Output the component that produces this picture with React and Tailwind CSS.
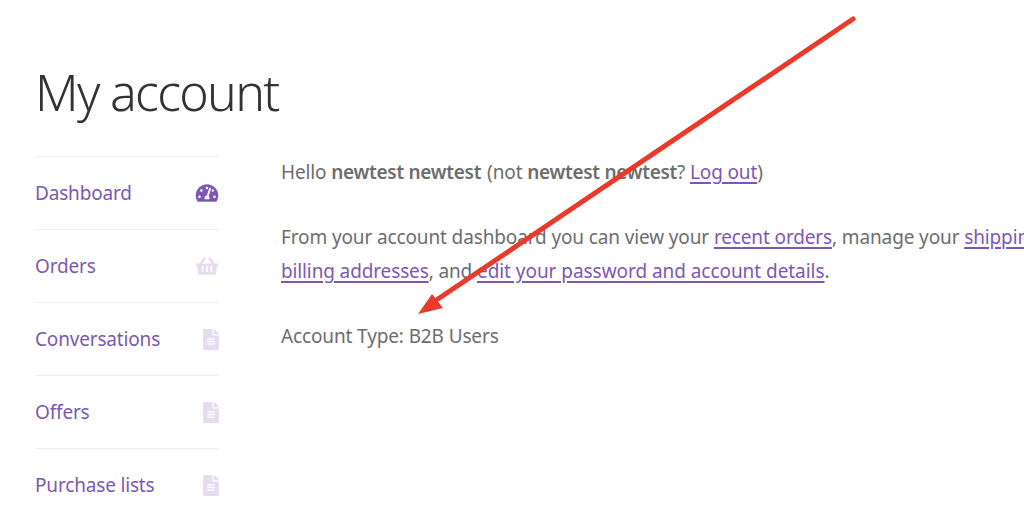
import React from 'react';
import { FaTachometerAlt, FaShoppingBasket, FaFileAlt } from 'react-icons/fa';

const navItems = [
  { label: 'Dashboard', icon: FaTachometerAlt, active: true },
  { label: 'Orders', icon: FaShoppingBasket },
  { label: 'Conversations', icon: FaFileAlt },
  { label: 'Offers', icon: FaFileAlt },
  { label: 'Purchase lists', icon: FaFileAlt },
];

const linkClass = 'text-[#7c58b4] underline decoration-[1.5px] underline-offset-[3px]';

const App = () => {
  return (
    <div className="relative w-[1024px] h-[516px] overflow-hidden bg-white font-['Noto_Sans',sans-serif] text-[#6d6d6d]">
      <h1 className="pt-[58px] pl-[35px] h-[156px] text-[50px] leading-[68px] font-light tracking-[-1.7px] text-[#333333]">
        My account
      </h1>

      <div className="flex">
        {/* Sidebar */}
        <nav className="ml-[35px] w-[184px] shrink-0">
          {navItems.map((item) => {
            const Icon = item.icon;
            return (
              <div
                key={item.label}
                className="h-[73px] border-t border-[#eeeeee] flex items-center justify-between text-[19px] tracking-[-0.17px] text-[#7c58b4]"
              >
                <span>{item.label}</span>
                {item.icon === FaShoppingBasket ? (
                  <Icon className="w-[24px] h-[20px] text-[#e5dcf0]" />
                ) : item.active ? (
                  <Icon className="w-[24px] h-[20px] text-[#7c58b4]" />
                ) : (
                  <Icon className="w-[16px] h-[21px] text-[#e5dcf0]" />
                )}
              </div>
            );
          })}
        </nav>

        {/* Content */}
        <div className="ml-[62px] -mt-[1px] whitespace-nowrap text-[19px] leading-[34px] tracking-[-0.13px]">
          <p className="mb-[31px]">
            Hello <strong className="font-semibold tracking-[-0.28px]">newtest newtest</strong>
            <span className="ml-[6px]">(not</span>{' '}
            <strong className="font-semibold tracking-[-0.28px]">newtest newtest</strong>?{' '}
            <a href="#" className={linkClass}>Log out</a>)
          </p>
          <p className="mb-[31px]">
            From your account dashboard you can view your{' '}
            <a href="#" className={linkClass}>recent orders</a>, manage your{' '}
            <a href="#" className={linkClass}>shipping and</a>
            <br />
            <a href="#" className={linkClass}>billing addresses</a>, and{' '}
            <a href="#" className={`${linkClass} tracking-[-0.05px]`}>edit your password and account details</a>.
          </p>
          <p>Account Type: B2B Users</p>
        </div>
      </div>

      {/* Annotation arrow */}
      <svg className="absolute left-0 top-0 w-[1024px] h-[516px] pointer-events-none" viewBox="0 0 1024 516">
        <line x1="853" y1="19" x2="435" y2="301" stroke="#e93a2b" strokeWidth="5" strokeLinecap="round" />
        <polygon points="418,314 432,294 443,308" fill="#e93a2b" />
      </svg>
    </div>
  );
};

export default App;
